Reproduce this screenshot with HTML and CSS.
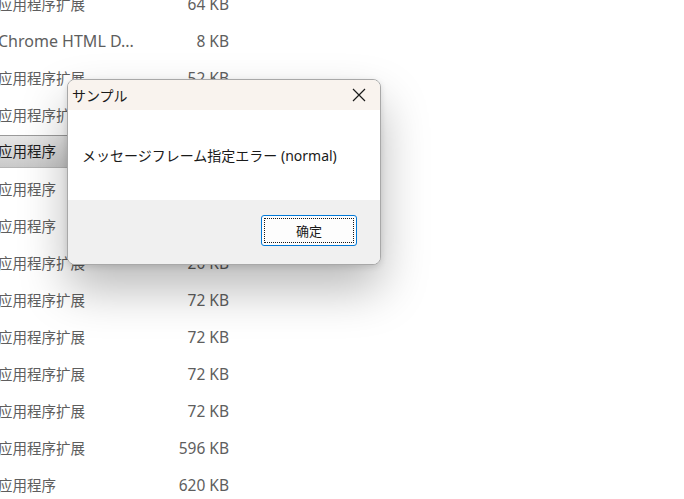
FILE: index.html
```html
<!DOCTYPE html>
<html>
    <head>
        <meta name="viewport" content="width=device-width, initial-scale=1">
        <link rel="stylesheet" href="styles.css">
    </head>
    <body>
        <div class="file-list">
            <div class="row"><span class="name">应用程序扩展</span><span class="size">64 KB</span></div>
            <div class="row"><span class="name latin">Chrome HTML D...</span><span class="size">8 KB</span></div>
            <div class="row"><span class="name">应用程序扩展</span><span class="size">52 KB</span></div>
            <div class="row"><span class="name">应用程序扩展</span><span class="size">24 KB</span></div>
            <div class="row selected"><span class="name">应用程序</span><span class="size">16 KB</span></div>
            <div class="row"><span class="name">应用程序</span><span class="size">32 KB</span></div>
            <div class="row"><span class="name">应用程序</span><span class="size">40 KB</span></div>
            <div class="row"><span class="name">应用程序扩展</span><span class="size">20 KB</span></div>
            <div class="row"><span class="name">应用程序扩展</span><span class="size">72 KB</span></div>
            <div class="row"><span class="name">应用程序扩展</span><span class="size">72 KB</span></div>
            <div class="row"><span class="name">应用程序扩展</span><span class="size">72 KB</span></div>
            <div class="row"><span class="name">应用程序扩展</span><span class="size">72 KB</span></div>
            <div class="row"><span class="name">应用程序扩展</span><span class="size">596 KB</span></div>
            <div class="row"><span class="name">应用程序</span><span class="size">620 KB</span></div>
        </div>

        <div class="dialog">
            <div class="dialog-title">
                <span class="title-text">サンプル</span>
                <svg class="close-icon" width="14" height="14" viewBox="0 0 14 14">
                    <path d="M1 1 L13 13 M13 1 L1 13" stroke="#1a1a1a" stroke-width="1.2" fill="none"/>
                </svg>
            </div>
            <div class="dialog-body">
                <p class="message">メッセージフレーム指定エラー (normal)</p>
            </div>
            <div class="dialog-footer">
                <button class="ok-button"><span class="focus-ring">确定</span></button>
            </div>
        </div>
    </body>
</html>
```

FILE: styles.css
```css
html, body {
margin: 0;
padding: 0;
background: #ffffff;
overflow: hidden;
}

body {
width: 684px;
height: 499px;
position: relative;
font-family: "Noto Sans", "Noto Sans CJK SC", sans-serif;
}

.file-list {
margin-top: -15px;
margin-left: -2px;
}

.row {
display: flex;
align-items: center;
height: 37px;
width: 240px;
font-size: 14.5px;
color: #5e5e5e;
}

.row .name {
width: 150px;
white-space: nowrap;
}

.row .name.latin {
font-size: 16px;
}

.row .size {
width: 81px;
text-align: right;
font-size: 15.5px;
}

.row.selected {
color: #1e1e1e;
}

.row.selected .name {
height: 31px;
line-height: 31px;
width: 240px;
padding-left: 2px;
margin-left: -2px;
background: linear-gradient(#e6e6e6, #c9c9c9);
border-top: 1px solid #9a9a9a;
border-bottom: 1px solid #b5b5b5;
}

.row.selected .size {
display: none;
}

/* message box over the list */
.dialog {
position: absolute;
left: 67px;
top: 79px;
width: 312px;
height: 184px;
border: 1px solid #a8a8a8;
border-radius: 8px;
overflow: hidden;
background: #ffffff;
box-shadow: 0 24px 48px rgba(0, 0, 0, 0.28), 0 2px 6px rgba(0, 0, 0, 0.12);
display: flex;
flex-direction: column;
font-family: "Noto Sans", "Noto Sans CJK JP", sans-serif;
}

.dialog-title {
height: 30px;
display: flex;
align-items: center;
justify-content: space-between;
padding: 0 14px 0 4px;
background: #f9f3ee;
}

.title-text {
font-size: 14px;
color: #1a1a1a;
}

.dialog-body {
height: 90px;
display: flex;
align-items: center;
}

.message {
margin: 0 0 0 14px;
font-size: 14px;
color: #1a1a1a;
}

.dialog-footer {
flex: 1;
background: #f0f0f0;
display: flex;
justify-content: flex-end;
align-items: flex-start;
padding: 15px 23px 0 0;
}

.ok-button {
width: 96px;
height: 31px;
padding: 2px;
border: 1px solid #0078d7;
border-radius: 3px;
background: #fdfdfd;
font-family: "Noto Sans CJK SC", sans-serif;
font-size: 13px;
color: #1a1a1a;
cursor: pointer;
}

.focus-ring {
display: flex;
align-items: center;
justify-content: center;
height: 100%;
border: 1px dotted #1a1a1a;
box-sizing: border-box;
}
```
